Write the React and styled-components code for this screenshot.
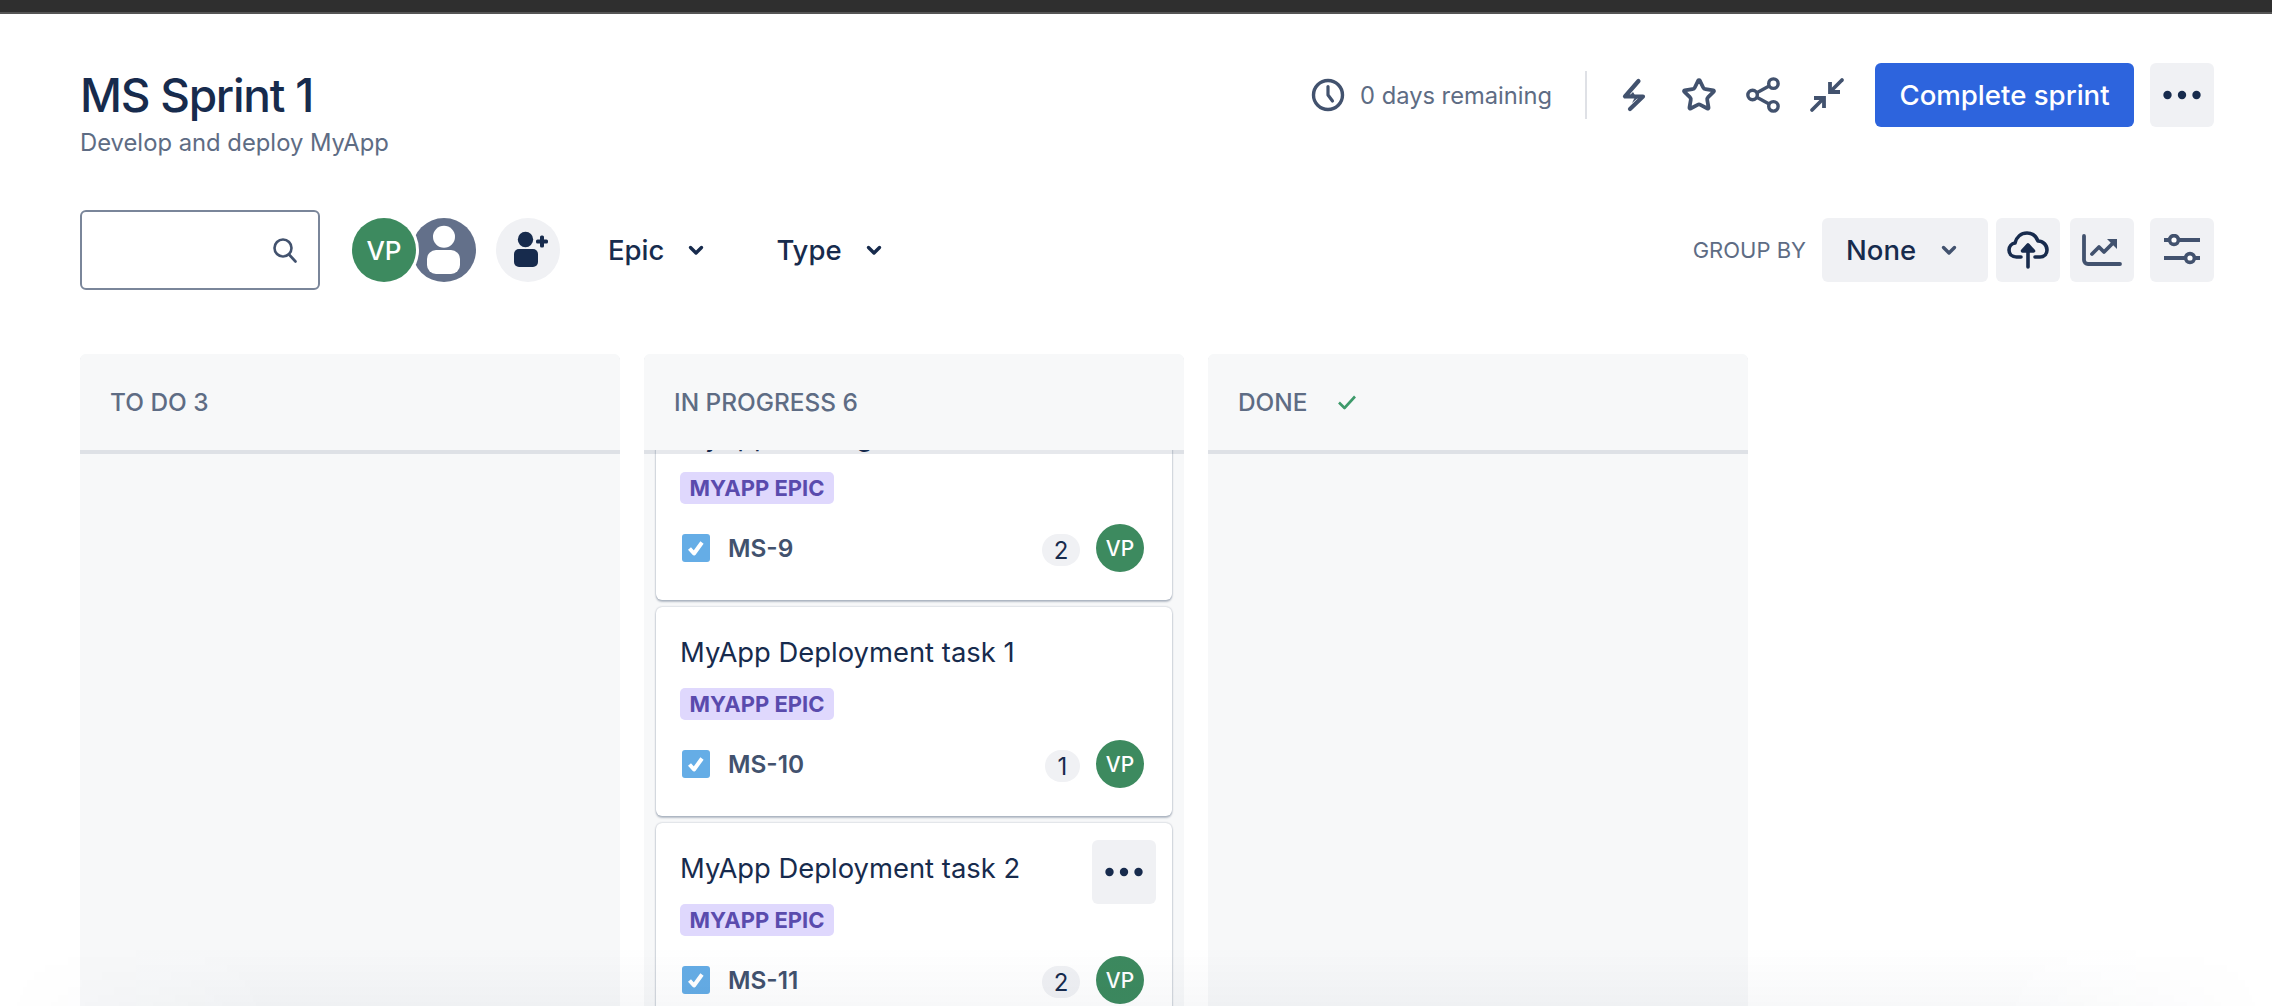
import React from 'react';
import styled, { createGlobalStyle } from 'styled-components';
import { Star } from 'lucide-react';

const Global = createGlobalStyle`
  html, body { margin: 0; padding: 0; background: #fff; height: 100%; overflow: hidden; }
  #root { height: 100%; }
  * { box-sizing: border-box; }
  body { font-family: Inter, "Liberation Sans", sans-serif; color: #172b4d; }
`;

const Page = styled.div`
  position: relative;
  height: 1006px;
  display: flex;
  flex-direction: column;
  overflow: hidden;
`;
const TopBar = styled.div`
  height: 14px;
  flex: none;
  background: #2f2f2f;
  border-bottom: 2px solid #555;
`;
const Fade = styled.div`
  position: absolute;
  left: 0; right: 0; bottom: 0;
  height: 60px;
  pointer-events: none;
  background: linear-gradient(to bottom, rgba(9,30,66,0), rgba(9,30,66,0.03));
  mask-image: linear-gradient(to right, transparent, #000 12%, #000 88%, transparent);
`;
const HeaderRow = styled.header`
  flex: none;
  display: flex;
  justify-content: space-between;
  align-items: flex-start;
  padding: 49px 58px 0 80px;
`;
const Title = styled.h1`
  margin: 0;
  font-size: 46px;
  line-height: 64px;
  font-weight: 500;
  letter-spacing: -1.25px;
  color: #172b4d;
`;
const Subtitle = styled.p`
  margin: 0;
  font-size: 23.8px;
  line-height: 32px;
  color: #5e6c84;
`;
const HeaderActions = styled.div`
  display: flex;
  align-items: center;
  height: 64px;
`;
const Remaining = styled.div`
  display: flex;
  align-items: center;
  gap: 15px;
  font-size: 23.7px;
  color: #5e6c84;
  margin-right: 33px;
  svg { display: block; }
`;
const Divider = styled.div`
  width: 2px;
  height: 48px;
  background: #dfe1e6;
  margin-right: 32px;
`;
const IconSlot = styled.span`
  width: ${p => p.$w || 36}px;
  height: 36px;
  margin-right: ${p => p.$gap ?? 28}px;
  display: flex;
  align-items: center;
  justify-content: center;
  color: #42526e;
  flex: none;
`;
const Primary = styled.button`
  width: 259px;
  height: 64px;
  border: 0;
  border-radius: 6px;
  background: #2d64dd;
  color: #fff;
  font: 500 27.6px Inter, sans-serif;
  margin-right: 16px;
`;
const GreyButton = styled.button`
  width: ${p => p.$w || 64}px;
  height: 64px;
  border: 0;
  padding: 0;
  border-radius: 6px;
  background: #f0f1f4;
  margin-left: ${p => p.$ml || 0}px;
  margin-right: ${p => p.$mr || 0}px;
  display: flex;
  align-items: center;
  justify-content: center;
  color: #42526e;
  flex: none;
`;
const NoneButton = styled(GreyButton)`
  justify-content: flex-start;
  padding-left: 24px;
  gap: 25px;
  font: 500 27.5px Inter, sans-serif;
  color: #172b4d;
`;
const FilterRow = styled.div`
  flex: none;
  display: flex;
  align-items: center;
  height: 80px;
  margin-top: 51px;
  padding: 0 58px 0 80px;
`;
const SearchBox = styled.div`
  width: 240px;
  height: 80px;
  border: 2px solid #7a869a;
  border-radius: 6px;
  display: flex;
  align-items: center;
  justify-content: flex-end;
  padding-right: 21px;
  margin-right: 32px;
`;
const Avatar = styled.div`
  width: ${p => p.$size}px;
  height: ${p => p.$size}px;
  border-radius: 50%;
  background: #3d8a5f;
  color: #fff;
  display: flex;
  align-items: center;
  justify-content: center;
  font-size: ${p => p.$font}px;
  font-weight: 500;
  flex: none;
`;
const RingAvatar = styled(Avatar)`
  position: relative;
  z-index: 1;
  box-shadow: 0 0 0 3px #fff;
`;
const GhostAvatar = styled.div`
  width: 64px;
  height: 64px;
  margin-left: -4px;
  margin-right: 20px;
  flex: none;
  svg { display: block; }
`;
const AddUser = styled.div`
  width: 64px;
  height: 64px;
  border-radius: 50%;
  background: #f0f1f4;
  margin-right: 48px;
  flex: none;
  svg { display: block; }
`;
const Filter = styled.div`
  display: flex;
  align-items: center;
  gap: 24px;
  font-size: 27.5px;
  font-weight: 500;
  color: #172b4d;
  margin-right: ${p => p.$mr || 0}px;
`;
const Spacer = styled.div`flex: 1;`;
const GroupLabel = styled.span`
  font-size: 22px;
  color: #5e6c84;
  margin-right: 16px;
`;
const Board = styled.main`
  flex: 1;
  min-height: 0;
  display: flex;
  gap: 24px;
  margin-top: 64px;
  padding-left: 80px;
`;
const Column = styled.section`
  position: relative;
  width: 540px;
  height: 100%;
  background: #f7f8f9;
  border-radius: 6px 6px 0 0;
  overflow: hidden;
  display: flex;
  flex-direction: column;
`;
const ColumnHead = styled.div`
  position: relative;
  z-index: 2;
  flex: none;
  height: 96px;
  padding-left: 30px;
  background: #f7f8f9;
  box-shadow: 0 4px 0 rgba(9,30,66,0.1);
  display: flex;
  align-items: center;
  gap: 30px;
  font-size: 24.4px;
  font-weight: 500;
  color: #5e6c84;
`;
const CardList = styled.div`
  flex: none;
  display: flex;
  flex-direction: column;
  gap: 7px;
  padding: 0 12px;
  margin-top: -59px;
`;
const Card = styled.article`
  position: relative;
  flex: none;
  height: 209px;
  background: #fff;
  border-radius: 6px;
  padding: 25px 28px 0 25px;
  box-shadow: 0 2px 2px rgba(9,30,66,0.25), 0 0 2px rgba(9,30,66,0.31);
`;
const CardTitle = styled.div`
  font-size: 27.4px;
  line-height: 40px;
  margin-left: -1px;
  color: #172b4d;
`;
const Tag = styled.span`
  display: block;
  width: 154px;
  height: 32px;
  margin: 16px 0 0 -1px;
  border-radius: 5px;
  background: #dfd8fd;
  color: #5a4bad;
  font-size: 22px;
  line-height: 32px;
  font-weight: 700;
  text-align: center;
  white-space: nowrap;
`;
const CardRow = styled.div`
  display: flex;
  align-items: center;
  height: 48px;
  margin-top: 20px;
`;
const Check = styled.span`
  width: 28px;
  height: 28px;
  margin: 0 18px 0 1px;
  border-radius: 3px;
  background: #65ade6;
  display: flex;
  align-items: center;
  justify-content: center;
  flex: none;
`;
const IssueKey = styled.span`
  flex: 1;
  font-size: 24.4px;
  font-weight: 600;
  color: #42526e;
`;
const Count = styled.span`
  min-width: ${p => p.$w || 38}px;
  height: 32px;
  margin-right: 16px;
  margin-top: 4px;
  border-radius: 16px;
  background: #f0f1f4;
  display: flex;
  align-items: center;
  justify-content: center;
  font-size: 24px;
  color: #172b4d;
`;
const CardMore = styled(GreyButton)`
  position: absolute;
  top: 17px;
  right: 16px;
  color: #172b4d;
`;

const Dots = () => (
  <svg width="38" height="12" viewBox="0 0 38 12">
    <circle cx="4.5" cy="6" r="4.2" fill="#172b4d" />
    <circle cx="19" cy="6" r="4.2" fill="#172b4d" />
    <circle cx="33.5" cy="6" r="4.2" fill="#172b4d" />
  </svg>
);
const Chevron = ({ color = '#172b4d', w = 16 }) => (
  <svg width={w} height="11" viewBox="0 0 16 11" fill="none">
    <path d="M2.5 2.5 8 8l5.5-5.5" stroke={color} strokeWidth="3.4" strokeLinecap="round" strokeLinejoin="round" />
  </svg>
);
const CheckMark = () => (
  <svg width="20" height="20" viewBox="0 0 20 20" fill="none">
    <path d="M3.5 10.5 8 15.5 16 4.5" stroke="#fff" strokeWidth="4" strokeLinejoin="round" />
  </svg>
);

const Task = ({ title, id, count, hover }) => (
  <Card>
    <CardTitle>{title}</CardTitle>
    <Tag>MYAPP EPIC</Tag>
    <CardRow>
      <Check><CheckMark /></Check>
      <IssueKey>{id}</IssueKey>
      <Count $w={count === 1 ? 35 : 38}>{count}</Count>
      <Avatar $size={48} $font={21}>VP</Avatar>
    </CardRow>
    {hover && <CardMore><Dots /></CardMore>}
  </Card>
);

export default function App() {
  return (
    <Page>
      <Global />
      <TopBar />
      <HeaderRow>
        <div>
          <Title>MS Sprint 1</Title>
          <Subtitle>Develop and deploy MyApp</Subtitle>
        </div>
        <HeaderActions>
          <Remaining>
            <svg width="34" height="34" viewBox="0 0 34 34" fill="none">
              <circle cx="17" cy="17" r="14.5" stroke="#42526e" strokeWidth="3.4" />
              <path d="M17 8.5V17l4.5 6" stroke="#42526e" strokeWidth="3.2" strokeLinecap="round" strokeLinejoin="round" />
            </svg>
            <span>0 days remaining</span>
          </Remaining>
          <Divider />
          <IconSlot $w={30} $gap={32}>
            <svg width="26" height="34" viewBox="0 0 26 34" fill="none">
              <path d="M17.5 3 4 18.5h18L9 31" stroke="#42526e" strokeWidth="4.2" strokeLinecap="round" strokeLinejoin="round" />
              <path d="M12 14l-5 5h8zM14 19l-3 6 7-6z" fill="#42526e" />
            </svg>
          </IconSlot>
          <IconSlot $gap={28}><Star size={38} strokeWidth={2.5} /></IconSlot>
          <IconSlot $gap={28}>
            <svg width="38" height="38" viewBox="0 0 38 38" fill="none" stroke="#42526e" strokeWidth="3.6">
              <circle cx="8" cy="19" r="5" />
              <circle cx="30" cy="7" r="5" />
              <circle cx="30" cy="31" r="5" />
              <path d="M12.5 16.5 25.5 9.5M12.5 21.5l13 7" />
            </svg>
          </IconSlot>
          <IconSlot $gap={30}>
            <svg width="36" height="36" viewBox="0 0 36 36" fill="none" stroke="#42526e" strokeWidth="3.8" strokeLinecap="round">
              <path d="M33 3 22 14" />
              <path d="M21 5v10h10" strokeLinecap="butt" strokeLinejoin="miter" />
              <path d="M3 33 14 22" />
              <path d="M5 21h10v10" strokeLinecap="butt" strokeLinejoin="miter" />
            </svg>
          </IconSlot>
          <Primary>Complete sprint</Primary>
          <GreyButton><Dots /></GreyButton>
        </HeaderActions>
      </HeaderRow>

      <FilterRow>
        <SearchBox>
          <svg width="24" height="25" viewBox="0 0 24 25" fill="none" stroke="#42526e" strokeWidth="2.6" strokeLinecap="round">
            <circle cx="10" cy="10" r="8.5" />
            <path d="m16.5 17 6 6.5" />
          </svg>
        </SearchBox>
        <RingAvatar $size={64} $font={26}>VP</RingAvatar>
        <GhostAvatar>
          <svg width="64" height="64" viewBox="0 0 64 64">
            <circle cx="32" cy="32" r="32" fill="#63708a" />
            <circle cx="32" cy="18.7" r="11" fill="#fff" />
            <rect x="15" y="32" width="33" height="24" rx="9" fill="#fff" />
          </svg>
        </GhostAvatar>
        <AddUser>
          <svg width="64" height="64" viewBox="0 0 64 64">
            <circle cx="29.5" cy="21.5" r="7.7" fill="#172b4d" />
            <rect x="18" y="31" width="24" height="18" rx="5" fill="#172b4d" />
            <rect x="40" y="21.5" width="12" height="4" rx="1.5" fill="#172b4d" />
            <rect x="44" y="17.5" width="4" height="12" rx="1.5" fill="#172b4d" />
          </svg>
        </AddUser>
        <Filter $mr={72}>Epic <Chevron /></Filter>
        <Filter>Type <Chevron /></Filter>
        <Spacer />
        <GroupLabel>GROUP BY</GroupLabel>
        <NoneButton $w={166} $mr={8}>None <Chevron color="#42526e" /></NoneButton>
        <GreyButton $mr={10}>
          <svg width="42" height="38" viewBox="0 0 42 38" fill="none" stroke="#172b4d" strokeWidth="3.6" strokeLinecap="round" strokeLinejoin="round">
            <path d="M14 26H9.5C5 26 2 23 2 19c0-3.6 2.6-6.5 6-7C9.5 6 14 2 20 2c5 0 9 3 11 8 5 0 9 4 9 9 0 4-3 7-7 7h-5" />
            <path d="M21 36V15" />
            <path d="M15.5 20 21 14l5.5 6z" fill="#172b4d" />
          </svg>
        </GreyButton>
        <GreyButton $mr={16}>
          <svg width="40" height="32" viewBox="0 0 40 32" fill="none" stroke="#42526e" strokeWidth="3.8" strokeLinecap="round" strokeLinejoin="round">
            <path d="M2 2v24a4 4 0 0 0 4 4h32" />
            <path d="M10 20l7-7 5 5 9-9" />
            <path d="M25 5h10v10z" fill="#42526e" stroke="none" />
          </svg>
        </GreyButton>
        <GreyButton>
          <svg width="36" height="32" viewBox="0 0 36 32" fill="none">
            <path d="M0 6h36M0 24h36" stroke="#42526e" strokeWidth="4.2" />
            <circle cx="10" cy="6" r="4.4" fill="#fff" stroke="#42526e" strokeWidth="3.6" />
            <circle cx="26" cy="24" r="4.4" fill="#fff" stroke="#42526e" strokeWidth="3.6" />
          </svg>
        </GreyButton>
      </FilterRow>

      <Board>
        <Column>
          <ColumnHead>TO DO 3</ColumnHead>
        </Column>
        <Column>
          <ColumnHead>IN PROGRESS 6</ColumnHead>
          <CardList>
            <Task title="MyApp Testing" id="MS-9" count={2} />
            <Task title="MyApp Deployment task 1" id="MS-10" count={1} />
            <Task title="MyApp Deployment task 2" id="MS-11" count={2} hover />
          </CardList>
        </Column>
        <Column>
          <ColumnHead>
            DONE
            <svg width="20" height="16" viewBox="0 0 20 16" fill="none">
              <path d="M2 8.5 7.5 14 18 2.5" stroke="#3d9a6b" strokeWidth="2.6" strokeLinejoin="round" />
            </svg>
          </ColumnHead>
        </Column>
      </Board>
      <Fade />
    </Page>
  );
}
